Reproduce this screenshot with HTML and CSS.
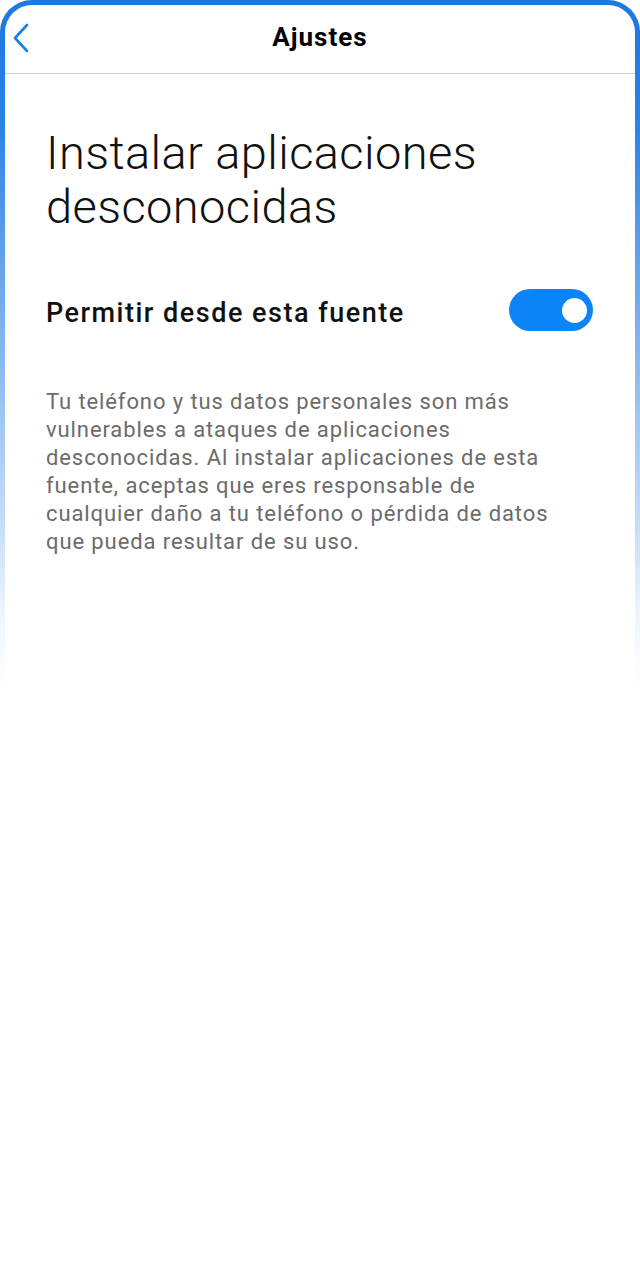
FILE: index.html
```html
<!DOCTYPE html>
<html lang="es">
<head>
    <meta charset="UTF-8">
    <meta name="viewport" content="width=device-width, initial-scale=1.0">
    <title>Ajustes</title>
    <link rel="stylesheet" href="styles.css">
</head>
<body>
    <div class="frame">
        <div class="screen">
            <header class="top-bar">
                <button class="back-btn" aria-label="Atrás">
                    <svg width="20" height="30" viewBox="0 0 20 30">
                        <path d="M16 2 L4 15 L16 28" fill="none" stroke="#1a7fe6" stroke-width="2.6" stroke-linecap="round" stroke-linejoin="round"/>
                    </svg>
                </button>
                <h1 class="top-title">Ajustes</h1>
            </header>

            <main class="content">
                <h2 class="page-title">Instalar aplicaciones desconocidas</h2>

                <div class="setting-row">
                    <span class="setting-label">Permitir desde esta fuente</span>
                    <div class="switch on"><div class="knob"></div></div>
                </div>

                <p class="note">Tu teléfono y tus datos personales son más vulnerables a ataques de aplicaciones desconocidas. Al instalar aplicaciones de esta fuente, aceptas que eres responsable de cualquier daño a tu teléfono o pérdida de datos que pueda resultar de su uso.</p>
            </main>
        </div>
    </div>
</body>
</html>
```

FILE: styles.css
```css
body {
    margin: 0;
    padding: 0;
    background-color: #fff;
    font-family: Roboto, "Noto Sans", Arial, sans-serif;
}

.frame {
    height: 1280px;
    padding: 5px 5px 0;
    box-sizing: border-box;
    border-radius: 32px 32px 0 0;
    background: linear-gradient(to bottom, #1a78e0 0px, #2a82e4 120px, #7fb2ef 330px, #c4dcf8 520px, rgba(230, 240, 253, 0.6) 620px, rgba(255, 255, 255, 0) 690px);
}

.screen {
    height: 100%;
    background-color: #fff;
    border-radius: 27px 27px 0 0;
}

.top-bar {
    height: 69px;
    display: flex;
    align-items: center;
    justify-content: center;
    padding-bottom: 4px;
    box-sizing: border-box;
    border-bottom: 1px solid #cfcfcf;
    position: relative;
}

.back-btn {
    position: absolute;
    left: 6px;
    top: 18px;
    background: none;
    border: none;
    padding: 0;
    cursor: pointer;
}

.top-title {
    margin: 0;
    font-size: 26px;
    font-weight: 700;
    letter-spacing: 1px;
    color: #000;
}

.content {
    padding: 0 42px 0 41px;
}

.page-title {
    margin: 52px 0 0;
    font-size: 47px;
    font-weight: 300;
    line-height: 54px;
    letter-spacing: 0.4px;
    color: #111;
}

.setting-row {
    display: flex;
    align-items: center;
    justify-content: space-between;
    margin-top: 55px;
}

.setting-label {
    font-size: 27px;
    font-weight: 500;
    letter-spacing: 1.5px;
    color: #111;
    padding-top: 5px;
}

.switch {
    width: 84px;
    height: 42px;
    border-radius: 21px;
    background-color: #0c83f7;
    display: flex;
    align-items: center;
    justify-content: flex-end;
    padding: 0 6px;
    box-sizing: border-box;
}

.knob {
    width: 25px;
    height: 25px;
    border-radius: 50%;
    background-color: #fff;
}

.note {
    margin: 57px 0 0;
    max-width: 528px;
    font-size: 22px;
    line-height: 28px;
    letter-spacing: 0.9px;
    color: #6b6b6b;
}
```
